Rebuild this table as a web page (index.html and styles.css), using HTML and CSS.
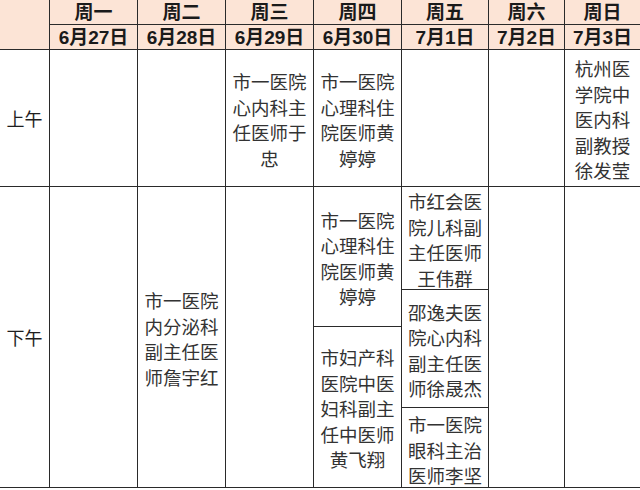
FILE: index.html
```html
<!DOCTYPE html>
<html lang="zh-CN">
<head>
<meta charset="utf-8">
<title>门诊排班表</title>
<link rel="stylesheet" href="styles.css">
</head>
<body>
<div class="table">
  <div class="cell head corner"></div>
  <div class="cell head day">周一</div>
  <div class="cell head day">周二</div>
  <div class="cell head day">周三</div>
  <div class="cell head day">周四</div>
  <div class="cell head day">周五</div>
  <div class="cell head day">周六</div>
  <div class="cell head day last">周日</div>

  <div class="cell head date">6月27日</div>
  <div class="cell head date">6月28日</div>
  <div class="cell head date">6月29日</div>
  <div class="cell head date">6月30日</div>
  <div class="cell head date">7月1日</div>
  <div class="cell head date">7月2日</div>
  <div class="cell head date last">7月3日</div>

  <div class="cell label">上午</div>
  <div class="cell"></div>
  <div class="cell"></div>
  <div class="cell text">市一医院心内科主任医师于忠</div>
  <div class="cell text">市一医院心理科住院医师黄婷婷</div>
  <div class="cell"></div>
  <div class="cell"></div>
  <div class="cell text narrow last">杭州医学院中医内科副教授徐发莹</div>

  <div class="cell label">下午</div>
  <div class="cell"></div>
  <div class="cell text">市一医院内分泌科副主任医师詹宇红</div>
  <div class="cell"></div>
  <div class="cell split split-thu">
    <div class="sub text">市一医院心理科住院医师黄婷婷</div>
    <div class="sub text">市妇产科医院中医妇科副主任中医师黄飞翔</div>
  </div>
  <div class="cell split split-fri">
    <div class="sub text">市红会医院儿科副主任医师王伟群</div>
    <div class="sub text">邵逸夫医院心内科副主任医师徐晟杰</div>
    <div class="sub text">市一医院眼科主治医师李坚</div>
  </div>
  <div class="cell"></div>
  <div class="cell last"></div>
</div>
</body>
</html>
```
FILE: styles.css
```css
html, body {
  margin: 0;
  padding: 0;
  background: #ffffff;
}

body {
  font-family: "Liberation Sans", "Noto Sans CJK SC", sans-serif;
  color: #2b2b2b;
}

.table {
  width: 640px;
  display: grid;
  grid-template-columns: 50px 88px 88px 88px 88px 87px 76px 75px;
  grid-template-rows: 25px 25px 137px 301px;
}

.cell {
  box-sizing: border-box;
  border-right: 1px solid #2a2a2a;
  border-bottom: 1px solid #2a2a2a;
  background: #ffffff;
}

.cell.last {
  border-right: none;
}

.head {
  background: #fce4d6;
  font-weight: bold;
  color: #1a1a1a;
  font-size: 19px;
  display: flex;
  align-items: center;
  justify-content: center;
  line-height: 1;
}

.corner {
  grid-row: 1 / span 2;
}

.date {
  font-size: 19px;
}

.label {
  display: flex;
  align-items: center;
  justify-content: center;
  font-size: 18px;
  color: #1e1e1e;
  font-family: "Noto Sans CJK SC", sans-serif;
}

.text {
  display: flex;
  align-items: center;
  justify-content: center;
  text-align: center;
  font-family: "Noto Sans CJK SC", sans-serif;
  font-size: 18.5px;
  line-height: 25.5px;
  color: #333333;
  padding: 4px 5px 0;
}

.narrow {
  padding: 4px 2px 0;
}

.split {
  display: grid;
}

.split-thu {
  grid-template-rows: 140px 1fr;
}

.split-fri {
  grid-template-rows: 103px 118px 1fr;
}

.sub {
  box-sizing: border-box;
  border-bottom: 1px solid #2a2a2a;
}

.sub:last-child {
  border-bottom: none;
}
```
